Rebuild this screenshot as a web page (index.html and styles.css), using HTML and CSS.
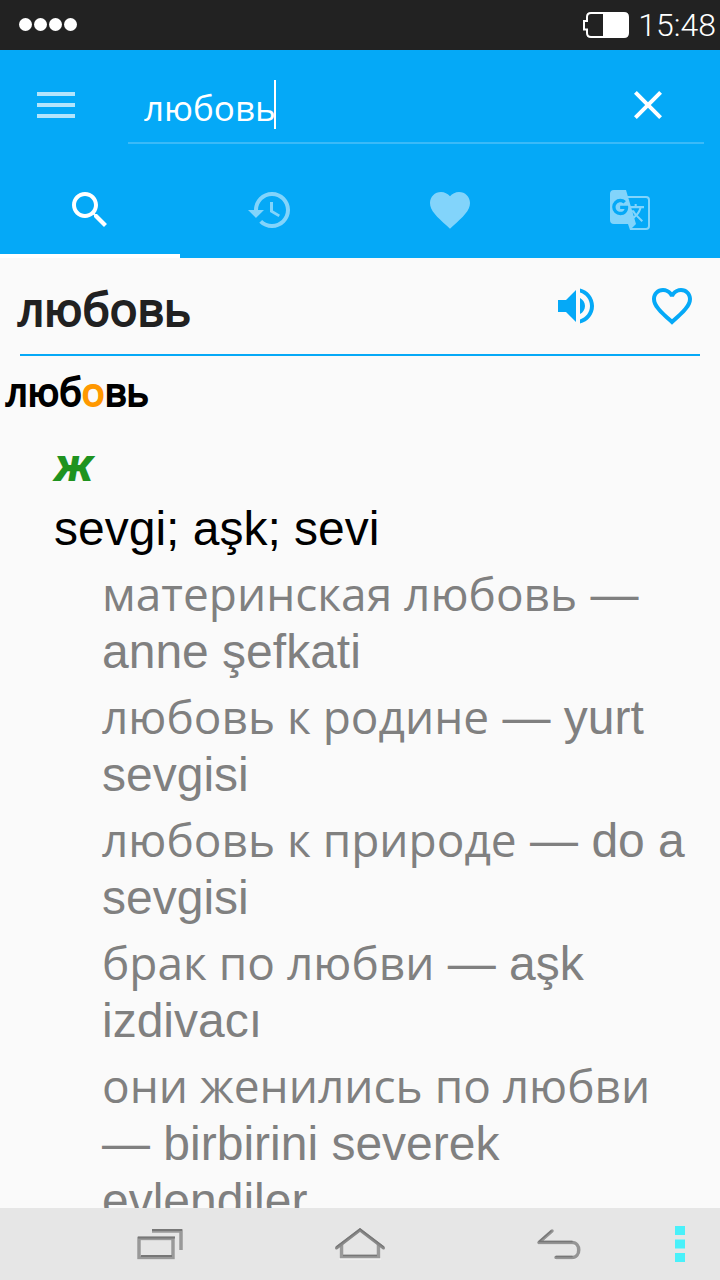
FILE: index.html
```html
<!DOCTYPE html>
<html lang="ru">
<head>
    <meta charset="UTF-8">
    <meta name="viewport" content="width=device-width, initial-scale=1.0">
    <title>любовь</title>
    <link rel="stylesheet" href="styles.css">
</head>
<body>
    <div class="status-bar">
        <div class="signal"><i></i><i></i><i></i><i></i></div>
        <div class="status-right">
            <svg class="battery" width="46" height="26" viewBox="0 0 46 26">
                <path d="M8 1H41q4 0 4 4V21q0 4-4 4H8q-4 0-4-4V17.500H1V9H4V5q0-4 4-4z" fill="none" stroke="#fff" stroke-width="2"/>
                <path d="M20 1H41q4 0 4 4V21q0 4-4 4H20z" fill="#fff"/>
            </svg>
            <span class="clock">15:48</span>
        </div>
    </div>

    <header class="header">
        <div class="toolbar">
            <button class="icon-button menu-button" aria-label="Меню">
                <svg width="38" height="26" viewBox="0 0 38 26"><path d="M0 0h38v4H0zM0 11h38v4H0zM0 22h38v4H0z"/></svg>
            </button>
            <div class="search-box">
                <input class="search-input" type="text" value="любовь" aria-label="Поиск">
                <span class="caret"></span>
                <button class="icon-button clear-button" aria-label="Очистить">
                    <svg width="48" height="48" viewBox="0 0 24 24"><path d="M19 6.410L17.590 5 12 10.590 6.410 5 5 6.410 10.590 12 5 17.590 6.410 19 12 13.410 17.590 19 19 17.590 13.410 12z"/></svg>
                </button>
            </div>
        </div>
        <nav class="tabs">
            <button class="tab active" aria-label="Поиск">
                <svg width="48" height="48" viewBox="0 0 24 24"><path d="M15.500 14h-.79l-.28-.27C15.410 12.590 16 11.110 16 9.500 16 5.910 13.090 3 9.500 3S3 5.910 3 9.500 5.910 16 9.500 16c1.610 0 3.090-.59 4.230-1.570l.27.28v.79l5 4.990L20.490 19l-4.990-5zm-6 0C7.010 14 5 11.990 5 9.500S7.010 5 9.500 5 14 7.010 14 9.500 11.990 14 9.500 14z"/></svg>
            </button>
            <button class="tab" aria-label="История">
                <svg width="48" height="48" viewBox="0 0 24 24"><path d="M13 3c-4.970 0-9 4.030-9 9H1l3.890 3.890.07.14L9 12H6c0-3.870 3.130-7 7-7s7 3.130 7 7-3.130 7-7 7c-1.930 0-3.680-.79-4.940-2.060l-1.420 1.420C8.270 19.990 10.510 21 13 21c4.970 0 9-4.030 9-9s-4.030-9-9-9zm-1 5v5l4.280 2.540.72-1.210-3.500-2.080V8H12z"/></svg>
            </button>
            <button class="tab" aria-label="Избранное">
                <svg width="48" height="48" viewBox="0 0 24 24"><path d="M12 21.350l-1.450-1.320C5.400 15.360 2 12.280 2 8.500 2 5.420 4.420 3 7.500 3c1.740 0 3.410.81 4.500 2.090C13.090 3.810 14.760 3 16.500 3 19.580 3 22 5.420 22 8.500c0 3.780-3.400 6.860-8.550 11.540L12 21.350z"/></svg>
            </button>
            <button class="tab" aria-label="Переводчик">
                <svg width="48" height="48" viewBox="0 0 24 24"><path d="M20,5H10.880L10,2H4A2,2 0 0,0 2,4V17A2,2 0 0,0 4,19H11L12,22H20A2,2 0 0,0 22,20V7A2,2 0 0,0 20,5M7.170,14.590A4.090,4.090 0 0,1 3.080,10.500A4.090,4.090 0 0,1 7.170,6.410C8.210,6.410 9.160,6.780 9.910,7.500L10,7.540L8.750,8.720L8.690,8.670C8.400,8.400 7.910,8.080 7.170,8.080C5.860,8.080 4.790,9.170 4.790,10.500C4.790,11.830 5.860,12.920 7.170,12.920C8.540,12.920 9.130,12.050 9.290,11.460H7.080V9.910H11.030L11.040,10C11.080,10.190 11.090,10.380 11.090,10.590C11.090,12.940 9.500,14.590 7.170,14.590M13.200,12.880C13.530,13.500 13.940,14.060 14.390,14.580L13.850,15.110L13.200,12.880M13.970,12.120H13L12.670,11.080H16.660C16.660,11.080 16.320,12.390 15.100,13.820C14.580,13.200 14.210,12.590 13.970,12.120M21,20A1,1 0 0,1 20,21H13L15,19L14.190,16.230L15.110,15.310L17.790,18L18.500,17.270L15.810,14.590C16.710,13.560 17.410,12.340 17.730,11.080H19V10.040H15.360V9H14.320V10.040H12.360L11.180,6H20A1,1 0 0,1 21,7V20Z"/></svg>
            </button>
        </nav>
    </header>

    <main class="content">
        <div class="word-header">
            <h1 class="word-title">любовь</h1>
            <div class="word-actions">
                <button class="icon-button" aria-label="Произношение">
                    <svg width="48" height="48" viewBox="0 0 24 24"><path d="M3 9v6h4l5 5V4L7 9H3zm13.500 3c0-1.770-1.020-3.290-2.500-4.030v8.050c1.480-.73 2.500-2.250 2.500-4.020zM14 3.230v2.060c2.890.86 5 3.540 5 6.710s-2.110 5.850-5 6.710v2.060c4.010-.91 7-4.490 7-8.770s-2.990-7.860-7-8.770z"/></svg>
                </button>
                <button class="icon-button" aria-label="В избранное">
                    <svg width="48" height="48" viewBox="0 0 24 24"><path d="M16.500 3c-1.740 0-3.410.81-4.500 2.090C10.910 3.810 9.240 3 7.500 3 4.420 3 2 5.420 2 8.500c0 3.780 3.400 6.860 8.550 11.540L12 21.350l1.450-1.320C18.600 15.360 22 12.280 22 8.500 22 5.420 19.580 3 16.500 3zm-4.400 15.550l-.1.100-.1-.1C7.140 14.240 4 11.390 4 8.500 4 6.500 5.500 5 7.500 5c1.540 0 3.040.99 3.570 2.360h1.870C13.460 5.990 14.960 5 16.500 5c2 0 3.500 1.500 3.500 3.500 0 2.890-3.140 5.740-7.900 10.050z"/></svg>
                </button>
            </div>
        </div>

        <article class="entry">
            <h2 class="entry-word">люб<span class="stress">о</span>вь</h2>
            <div class="entry-body">
                <p class="gender">ж</p>
                <p class="translation" lang="tr">sevgi; aşk; sevi</p>
                <div class="examples">
                    <p><span class="ru">материнская любовь</span> — anne şefkati</p>
                    <p><span class="ru">любовь к родине</span> — yurt sevgisi</p>
                    <p><span class="ru">любовь к природе</span> — do a sevgisi</p>
                    <p><span class="ru">брак по любви</span> — aşk izdivacı</p>
                    <p><span class="ru">они женились по любви</span> — birbirini severek evlendiler</p>
                </div>
            </div>
        </article>
    </main>

    <footer class="nav-bar">
        <button class="nav-button" aria-label="Недавние">
            <svg width="52" height="40" viewBox="0 0 52 40" fill="none" stroke="#999" stroke-width="3.500">
                <path d="M5 15H39V34H5z" stroke="#fff" stroke-opacity=".5"/>
                <path d="M5 14.500H39V33.500H5zM18 7H47V26"/>
                <path d="M4 13.500H41M18 6H48M7 32H38" stroke="#777" stroke-width="2"/>
            </svg>
        </button>
        <button class="nav-button" aria-label="Домой">
            <svg width="52" height="40" viewBox="0 0 52 40" fill="none" stroke="#999" stroke-width="3.500">
                <path d="M7 22V33H45V22" stroke="#fff" stroke-opacity=".5" transform="translate(0 1)"/>
                <path d="M7.500 20V32.500H44.500V20"/>
                <path d="M2.500 24L26 6L49.500 24" stroke="#888" stroke-linecap="round" stroke-width="3"/>
                <path d="M9 31.500H43M2 23L26 5L50 23" stroke="#777" stroke-width="1.500"/>
            </svg>
        </button>
        <button class="nav-button" aria-label="Назад">
            <svg width="52" height="40" viewBox="0 0 52 40" fill="none" stroke-linecap="round" stroke-linejoin="round">
                <path d="M18 7L5 18.500H38c9 0 9 15 0 15H22" stroke="#f4f4f4" stroke-width="3" transform="translate(0 1)"/>
                <path d="M18 7L5 18.500H38c9 0 9 15 0 15H22" stroke="#959595" stroke-width="3.500"/>
                <path d="M17 7L5 17.500H38M22 32.500H38" stroke="#777" stroke-width="1.500"/>
            </svg>
        </button>
        <button class="nav-more" aria-label="Ещё">
            <svg width="10" height="36" viewBox="0 0 10 36"><path d="M0 0h10v9H0zM0 13.500h10v9H0zM0 27h10v9H0z" fill="#49f1fa"/></svg>
        </button>
    </footer>
</body>
</html>
```
FILE: styles.css
```css
* {
    margin: 0;
    padding: 0;
    box-sizing: border-box;
}

body {
    height: 100vh;
    display: flex;
    flex-direction: column;
    overflow: hidden;
    font-family: "Liberation Sans", Arial, sans-serif;
    font-size: 48px;
    line-height: 57px;
    color: #000;
    background-color: #fafafa;
}

button {
    border: none;
    background: none;
    cursor: pointer;
}

svg {
    display: block;
}

/* status bar */
.status-bar {
    flex: none;
    height: 50px;
    padding: 0 4px 0 19px;
    display: flex;
    justify-content: space-between;
    align-items: center;
    background-color: #222;
    color: #fff;
}

.signal {
    display: flex;
    gap: 2px;
    padding-bottom: 2px;
}

.signal i {
    width: 13px;
    height: 13px;
    border-radius: 50%;
    background-color: #fff;
}

.status-right {
    display: flex;
    align-items: center;
    gap: 9px;
}

.clock {
    font-family: Roboto, sans-serif;
    font-weight: 300;
    font-size: 32px;
    line-height: 50px;
}

/* header */
.header {
    flex: none;
    background-color: #05a9f7;
    color: #fff;
}

.header svg,
.word-header svg {
    fill: currentColor;
}

.toolbar {
    display: flex;
    align-items: center;
    height: 112px;
    padding-right: 16px;
}

.icon-button {
    display: flex;
    align-items: center;
    justify-content: center;
    color: inherit;
}

.menu-button {
    flex: none;
    width: 112px;
    height: 110px;
    margin-right: 16px;
    padding-bottom: 2px;
    opacity: 0.7;
}

.search-box {
    flex: 1;
    min-width: 0;
    position: relative;
    display: flex;
    align-items: center;
    height: 76px;
    border-bottom: 2px solid #3bbaf8;
}

.search-input {
    flex: 1;
    min-width: 0;
    height: 60px;
    padding: 4px 16px 0;
    border: none;
    outline: none;
    background: none;
    color: #fff;
    font-family: "Open Sans", "Noto Sans", sans-serif;
    font-size: 35px;
}

.caret {
    position: absolute;
    left: 146px;
    top: 12px;
    width: 2px;
    height: 49px;
    background-color: #fff;
}

.clear-button {
    flex: none;
    width: 112px;
}

.tabs {
    display: flex;
    height: 96px;
}

.tab {
    flex: 1;
    display: flex;
    align-items: center;
    justify-content: center;
    padding-top: 4px;
    border-bottom: 4px solid transparent;
    color: rgba(255, 255, 255, 0.5);
}

.tab.active {
    color: #fff;
    border-bottom-color: #fff;
}

/* word */
.content {
    flex: 1;
    min-height: 0;
    overflow-y: auto;
    scrollbar-width: none;
}

.word-header {
    display: flex;
    align-items: center;
    justify-content: space-between;
    height: 98px;
    margin: 0 20px;
    border-bottom: 2px solid #05a9f7;
}

.word-title,
.entry-word,
.ru {
    font-family: "Open Sans", "Noto Sans", sans-serif;
}

/* emboldened regular weight */
.word-title,
.entry-word {
    font-weight: 400;
    -webkit-text-stroke: 2px currentColor;
}

.word-title {
    margin-left: -2px;
    padding-top: 4px;
    font-size: 46px;
    color: #212121;
}

.word-actions {
    display: flex;
    gap: 48px;
    margin-right: 4px;
    color: #05a9f7;
}

/* dictionary entry */
.entry {
    padding: 7px 6px;
}

.entry-word {
    font-size: 38px;
}

.stress {
    color: #ff9800;
}

.entry-body {
    padding-left: 48px;
}

.entry-body p {
    margin-top: 9px;
}

.entry-body .gender {
    margin-top: 16px;
    font-family: Roboto, sans-serif;
    font-weight: 700;
    font-style: italic;
    color: #1f931f;
}

.entry-body .translation {
    margin-top: 7px;
}

.examples {
    padding-left: 48px;
    padding-right: 10px;
    color: #808080;
}

.ru {
    font-size: 46px;
    line-height: 46px;
}

/* system navigation */
.nav-bar {
    flex: none;
    display: flex;
    align-items: center;
    height: 72px;
    padding: 0 20px 0 60px;
    background-color: #e6e6e6;
}

.nav-button,
.nav-more {
    height: 72px;
    display: flex;
    align-items: center;
    justify-content: center;
}

.nav-button {
    flex: 1;
}

.nav-more {
    width: 40px;
}
```
